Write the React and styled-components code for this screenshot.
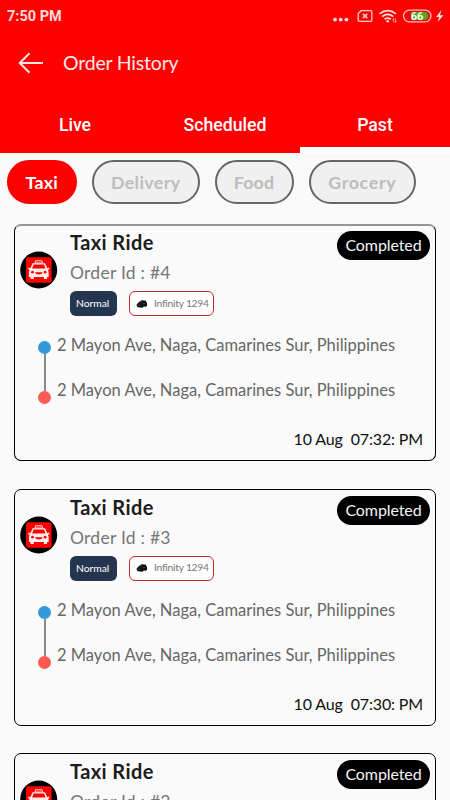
import React from "react";
import styled, { createGlobalStyle } from "styled-components";

const orders = [
  { id: 4, date: "10 Aug", time: "07:32: PM" },
  { id: 3, date: "10 Aug", time: "07:30: PM" },
  { id: 2, date: "10 Aug", time: "07:28: PM" },
];

const address = "2 Mayon Ave, Naga, Camarines Sur, Philippines";

const TaxiIcon = () => (
  <svg width='38' height='38' viewBox='0 0 38 38'>
    <circle cx='18.7' cy='19' r='18.5' fill='#000' />
    <rect x='6' y='6.2' width='25.6' height='25.6' rx='2.5' fill='#f00' />
    <path d='M15 12l.6-2.200h6.400l.6 2.200z' fill='#f00' stroke='#ffe4e0' />
    <path
      d='M12.600 12.200h12.400l2.300 5 1.600-.6.6 1.300-1.500 1c.5.900.7 1.900.7 3.200v4h-1.600v1.800h-3.200v-1.800H13.700v1.800h-3.200v-1.800H8.900v-4c0-1.300.2-2.300.7-3.200l-1.500-1 .6-1.300 1.600.6z'
      fill='#fff0ed'
    />
    <path d='M13.600 13.500h10.400l1.500 4.100H12.100z' fill='#f00' />
    <circle cx='12.500' cy='21.200' r='1.400' fill='#f00' />
    <circle cx='25.100' cy='21.200' r='1.400' fill='#f00' />
    <path d='M15 21.200h7.600c-.6 3-7 3-7.600 0z' fill='#f00' />
  </svg>
);

const CarIcon = () => (
  <svg width='12' height='10' viewBox='0 0 13 10'>
    <path
      d='M.7 5.500L3.200 2.700 6 1l4.200.3L12 4v3l-1.500 1-2-.3L7 9 2 8.600.8 7.500z'
      fill='#111'
    />
    <path d='M4 3.400l2.200-1.100M7.300 5l2.500-.7M2 6.300l2.400.3' stroke='#777' strokeWidth='.6' />
  </svg>
);

const StatusIcons = () => (
  <svg width='120' height='20' viewBox='0 0 120 20'>
    <g fill='#ffd9d9'>
      <circle cx='8' cy='11.600' r='1.900' />
      <circle cx='13.700' cy='11.600' r='1.900' />
      <circle cx='19.400' cy='11.600' r='1.900' />
    </g>
    <g fill='none' stroke='#ffd0d0' strokeWidth='1.300'>
      <path d='M34 2.700h9.500q1.300 0 1.300 1.300v8q0 1.300-1.300 1.300H32.500q-1.300 0-1.300-1.300V5.500z' />
      <path d='M35.900 5.700l4.400 4.400m0-4.400l-4.400 4.400' strokeWidth='1.500' />
    </g>
    <g fill='none' stroke='#ffe0e0' strokeWidth='1.700'>
      <path d='M52.500 5.800q8.200-6.400 16.400 0' />
      <path d='M55.100 8.600q5.600-4.300 11.200 0' />
      <path d='M57.600 11.200q3.100-2.300 6.200 0' />
    </g>
    <circle cx='60.700' cy='13.300' r='1.300' fill='#ffe0e0' />
    <path d='M66.600 14.500v-4m-1 1l1-1M68.600 10.500v4m1-1l-1 1' stroke='#ffc0c0' strokeWidth='.8' fill='none' />
    <path d='M84 4h13a4 4 0 0 1 0 8H84z' fill='#55a51c' />
    <rect x='76.500' y='2.200' width='27.500' height='11.600' rx='5.800' fill='none' stroke='#ffc4c4' strokeWidth='1.300' />
    <text x='90' y='12' textAnchor='middle' fill='#fff' fontFamily='Roboto, sans-serif' fontWeight='700' fontSize='11'>
      66
    </text>
    <path d='M114.500 2l-5.500 7h3.200l-1.500 5 5.600-6.800h-3.300z' fill='#ffe4e4' />
  </svg>
);

const OrderCard = ({ order, softTop }) => (
  <Card $softTop={softTop}>
    <CardHead>
      <TaxiIcon />
      <Summary>
        <Title>Taxi Ride</Title>
        <OrderId>Order Id : #{order.id}</OrderId>
        <Tags>
          <RideType>Normal</RideType>
          <Vehicle>
            <CarIcon />
            <span>Infinity 1294</span>
          </Vehicle>
        </Tags>
      </Summary>
      <Status>Completed</Status>
    </CardHead>
    <Route>
      <Track>
        <Dot $color='#3498db' />
        <Line />
        <Dot $color='#ff5a52' />
      </Track>
      <div>
        <Address>{address}</Address>
        <Address>{address}</Address>
      </div>
    </Route>
    <DateRow>
      <span>{order.date}</span>
      <span>{order.time}</span>
    </DateRow>
  </Card>
);

const App = () => {
  return (
    <Screen>
      <GlobalStyle />
      <Header>
        <StatusBar>
          <span>7:50 PM</span>
          <StatusIcons />
        </StatusBar>
        <TitleBar>
          <svg width='26' height='22' viewBox='0 0 26 22'>
            <path
              d='M25 11H2M11.500 1.300L1.700 11l9.800 9.700'
              fill='none'
              stroke='#ffe6e6'
              strokeWidth='1.900'
            />
          </svg>
          <h1>Order History</h1>
        </TitleBar>
        <Tabs>
          <Tab>Live</Tab>
          <Tab>Scheduled</Tab>
          <Tab $active>Past</Tab>
        </Tabs>
      </Header>
      <Chips>
        <Chip $active $width='70.5px' $spacing='0.3px'>Taxi</Chip>
        <Chip $width='107.5px' $spacing='0.4px'>Delivery</Chip>
        <Chip $width='79px' $spacing='0.2px'>Food</Chip>
        <Chip $width='107.5px' $spacing='0.7px'>Grocery</Chip>
      </Chips>
      <List>
        {orders.map((order, i) => (
          <OrderCard key={order.id} order={order} softTop={i === 0} />
        ))}
      </List>
    </Screen>
  );
};

const GlobalStyle = createGlobalStyle`
  * {
    box-sizing: border-box;
  }
  body {
    margin: 0;
    overflow: hidden;
    background: #fafafa;
  }
`;

const Screen = styled.div`
  width: 450px;
  height: 800px;
  overflow: hidden;
  background: #fafafa;
  font-family: Lato, sans-serif;
`;

const Header = styled.header`
  height: 153px;
  background: #f00;
  color: #ffe9e9;
  display: flex;
  flex-direction: column;
`;

const StatusBar = styled.div`
  height: 32px;
  padding: 0 3px 0 7px;
  display: flex;
  align-items: center;
  justify-content: space-between;
  font-family: Roboto, sans-serif;
  font-weight: 700;
  font-size: 14.5px;
  color: #ffdada;

  svg {
    margin-top: 4px;
  }
`;

const TitleBar = styled.div`
  height: 61px;
  padding-left: 18px;
  display: flex;
  align-items: center;
  gap: 19px;

  h1 {
    margin: 0;
    font-weight: 400;
    font-size: 19.5px;
    line-height: 24px;
    letter-spacing: -0.2px;
  }
`;

const Tabs = styled.nav`
  flex: 1;
  display: grid;
  grid-template-columns: repeat(3, 1fr);
`;

const Tab = styled.div`
  display: flex;
  align-items: center;
  justify-content: center;
  padding-top: ${({ $active }) => ($active ? "9px" : "3px")};
  border-bottom: ${({ $active }) => ($active ? "6px solid #fff" : "0")};
  font-family: Roboto, sans-serif;
  font-weight: 500;
  font-size: 17.7px;
  color: #fff;
`;

const Chips = styled.div`
  display: flex;
  gap: 15px;
  padding: 7px 0 0 6.5px;
`;

const Chip = styled.div`
  width: ${({ $width }) => $width};
  height: 44px;
  display: flex;
  align-items: center;
  justify-content: center;
  border: 2px solid ${({ $active }) => ($active ? "#f00" : "#666")};
  border-radius: 22px;
  background: ${({ $active }) => ($active ? "#f00" : "#f0f0f0")};
  color: ${({ $active }) => ($active ? "#fff" : "#bdbdbd")};
  font-weight: 700;
  font-size: 17.8px;
  letter-spacing: ${({ $spacing }) => $spacing || 0};
`;

const List = styled.main`
  padding: 20px 14px 0;
  display: flex;
  flex-direction: column;
  gap: 27.5px;
`;

const Card = styled.article`
  height: 237px;
  flex-shrink: 0;
  display: flex;
  flex-direction: column;
  border: 1px solid #000;
  border-top: ${({ $softTop }) => ($softTop ? "2px solid #969696" : "1px solid #000")};
  border-radius: 7px;
  padding: ${({ $softTop }) => ($softTop ? "0 5px" : "1px 5px 0")};
`;

const CardHead = styled.div`
  height: 92px;
  display: flex;
  align-items: flex-start;

  > svg {
    margin-top: 25px;
  }
`;

const Summary = styled.div`
  flex: 1;
  padding: 4px 0 0 12px;
`;

const Title = styled.div`
  color: #1c1c1c;
  font-weight: 700;
  font-size: 20px;
  line-height: 25px;
  letter-spacing: 0.4px;
`;

const OrderId = styled.div`
  margin-top: 6px;
  color: #777;
  font-size: 17.5px;
  line-height: 24px;
  letter-spacing: 0.25px;
`;

const Tags = styled.div`
  display: flex;
  gap: 12px;
  margin-top: 6px;
`;

const RideType = styled.div`
  width: 47px;
  height: 25px;
  border-radius: 6px;
  background: #24364f;
  color: #fff;
  font-size: 10.3px;
  line-height: 24px;
  padding-left: 6px;
`;

const Vehicle = styled.div`
  width: 85px;
  height: 25px;
  border: 1.4px solid #c8282b;
  border-radius: 6px;
  background: #fff;
  color: #777;
  display: flex;
  align-items: center;
  gap: 6px;
  padding-left: 6px;
  font-size: 10.3px;
  letter-spacing: -0.25px;
  white-space: nowrap;

  span {
    margin-top: -2px;
  }
`;

const Status = styled.div`
  width: 93px;
  height: 29px;
  margin-top: 5px;
  border-radius: 15px;
  background: #000;
  color: #f5f5f5;
  font-size: 16px;
  line-height: 28px;
  letter-spacing: -0.1px;
  text-align: center;
`;

const Route = styled.div`
  display: flex;
  padding: 15px 0 0 18px;
  gap: 6px;
`;

const Track = styled.div`
  display: flex;
  flex-direction: column;
  align-items: center;
  padding-top: 8px;
`;

const Dot = styled.div`
  width: 13px;
  height: 13px;
  border-radius: 50%;
  background: ${({ $color }) => $color};
`;

const Line = styled.div`
  width: 2px;
  height: 37px;
  background: #8a8a8a;
`;

const Address = styled.div`
  height: 45px;
  color: #666;
  font-size: 16.5px;
  line-height: 24px;
  white-space: nowrap;
`;

const DateRow = styled.div`
  display: flex;
  justify-content: flex-end;
  gap: 8px;
  margin-top: 4px;
  padding-right: 7px;
  color: #111;
  font-size: 16px;
  line-height: 24px;
  letter-spacing: -0.15px;
`;

export default App;
